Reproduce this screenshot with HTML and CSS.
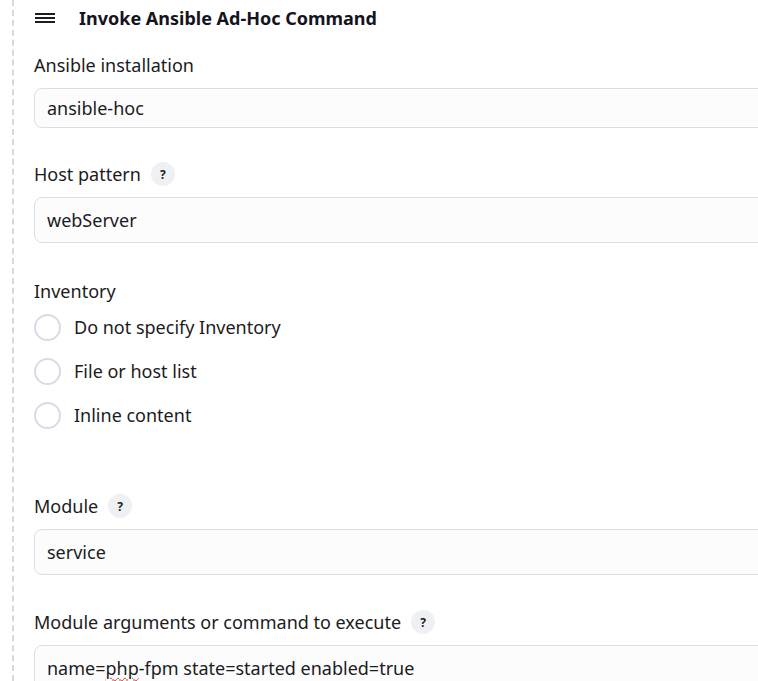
FILE: index.html
```html
<!DOCTYPE html>
<html lang="en">
<head>
<meta charset="utf-8">
<title>Invoke Ansible Ad-Hoc Command</title>
<link rel="stylesheet" href="styles.css">
</head>
<body>
<div class="section">
  <div class="header">
    <svg class="menu-icon" width="20" height="10" viewBox="0 0 20 10" aria-hidden="true">
      <rect x="0" y="0" width="20" height="2" fill="#1c1c24"/>
      <rect x="0" y="4" width="20" height="2" fill="#1c1c24"/>
      <rect x="0" y="8" width="20" height="2" fill="#1c1c24"/>
    </svg>
    <h2 class="title">Invoke Ansible Ad-Hoc Command</h2>
  </div>

  <div class="field first">
    <div class="label-row"><span class="label">Ansible installation</span></div>
    <div class="input short">ansible-hoc</div>
  </div>

  <div class="field">
    <div class="label-row"><span class="label">Host pattern</span><span class="help">?</span></div>
    <div class="input">webServer</div>
  </div>

  <div class="field inventory">
    <div class="label-row"><span class="label">Inventory</span></div>
    <div class="radios">
      <div class="radio"><span class="circle"></span><span class="radio-text">Do not specify Inventory</span></div>
      <div class="radio"><span class="circle"></span><span class="radio-text">File or host list</span></div>
      <div class="radio"><span class="circle"></span><span class="radio-text">Inline content</span></div>
    </div>
  </div>

  <div class="field module">
    <div class="label-row"><span class="label">Module</span><span class="help">?</span></div>
    <div class="input">service</div>
  </div>

  <div class="field args">
    <div class="label-row"><span class="label">Module arguments or command to execute</span><span class="help">?</span></div>
    <div class="input">name=<span class="spell">php</span>-fpm state=started enabled=true</div>
  </div>
</div>
</body>
</html>
```
FILE: styles.css
```css
html, body {
  margin: 0;
  padding: 0;
  background: #ffffff;
  overflow: hidden;
}
body {
  font-family: "Noto Sans", "Open Sans", sans-serif;
  color: #1b1b22;
  width: 758px;
  height: 681px;
}
.section {
  margin-left: 12px;
  border-left: 2px dashed #d3d8e2;
  padding-left: 20px;
  padding-top: 6px;
  height: 681px;
  width: 760px;
  box-sizing: border-box;
  display: flex;
  flex-direction: column;
}
.header {
  height: 36px;
  display: flex;
  align-items: center;
  gap: 24px;
  padding-left: 1px;
}
.menu-icon {
  display: block;
}
.title {
  margin: 0;
  font-size: 18px;
  font-weight: 700;
  color: #14141c;
}
.field {
  display: flex;
  flex-direction: column;
  gap: 11px;
  margin-top: 34px;
}
.field.first {
  margin-top: 23px;
}
.field.inventory {
  margin-top: 36px;
}
.field.module {
  margin-top: 65px;
}
.field.args {
  margin-top: 35px;
}
.label-row {
  height: 24px;
  display: flex;
  align-items: center;
  gap: 10px;
}
.label {
  font-size: 18px;
  line-height: 24px;
}
.help {
  width: 24px;
  height: 24px;
  border-radius: 50%;
  background: #eef0f4;
  font-size: 12px;
  font-weight: 700;
  display: flex;
  align-items: center;
  justify-content: center;
  color: #1b1b22;
}
.input {
  height: 46px;
  box-sizing: border-box;
  border: 1px solid #d9dde8;
  border-radius: 8px;
  background: #fcfcfd;
  padding: 0 12px;
  display: flex;
  align-items: center;
  font-size: 18px;
  white-space: pre;
}
.input.short {
  height: 40px;
}
.spell {
  text-decoration: underline wavy #e0342c;
  text-decoration-thickness: 1px;
  text-underline-offset: 2px;
}
.radios {
  display: flex;
  flex-direction: column;
  gap: 16px;
  margin-top: -1px;
}
.radio {
  display: flex;
  align-items: center;
  gap: 13px;
  height: 28px;
}
.circle {
  width: 27px;
  height: 27px;
  box-sizing: border-box;
  border: 2px solid #d6dbe6;
  border-radius: 50%;
  background: #ffffff;
}
.radio-text {
  font-size: 18px;
}
```
